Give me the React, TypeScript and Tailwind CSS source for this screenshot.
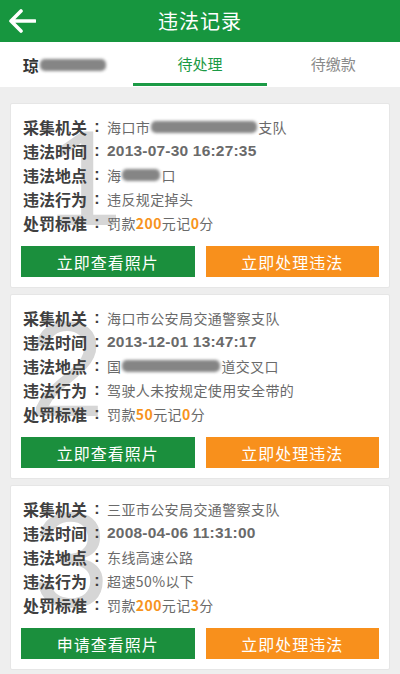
import React from "react";

const FONT = { fontFamily: '"Noto Sans CJK SC", "Noto Sans", "Liberation Sans", sans-serif' };

function Blur({ w }: { w: number }) {
  return (
    <span
      className="inline-block h-[12px] rounded-[5px] bg-[#858585] blur-[1.5px] align-middle mx-[1px]"
      style={{ width: w }}
    />
  );
}

type Row = { label: string; value: React.ReactNode };

function Card({ num, rows, left }: { num: string; rows: Row[]; left: string }) {
  return (
    <div className="relative bg-white border border-[#e6e6e6] rounded-[2px] px-[10px] pt-[11px] pb-[10px] overflow-hidden">
      <div
        className={`absolute top-[6px] ${left} text-[136px] leading-none text-[#d6d6d6] select-none`}
        style={{ fontFamily: '"Liberation Sans", sans-serif' }}
      >
        {num}
      </div>
      <div className="relative">
        {rows.map((r, i) => (
          <div key={i} className="flex items-center h-[24px] pl-[2px]">
            <span className="text-[16px] font-bold text-[#404040] whitespace-nowrap">{r.label}</span>
            <span className="w-[20px] text-center text-[16px] font-bold text-[#404040]" style={{ fontFamily: '"Liberation Sans", sans-serif' }}>:</span>
            <span className="text-[14px] text-[#6a6a6a] whitespace-nowrap flex items-center tracking-[0.4px]">{r.value}</span>
          </div>
        ))}
        <div className="grid grid-cols-2 gap-[11px] mt-[11px]">
          <button className="h-[31px] bg-[#1b8f3d] text-white text-[16px] tracking-[1px]">
            {num === "3" ? "申请查看照片" : "立即查看照片"}
          </button>
          <button className="h-[31px] bg-[#f8901c] text-white text-[16px] tracking-[1px]">立即处理违法</button>
        </div>
      </div>
    </div>
  );
}

const Time = ({ t }: { t: string }) => (
  <span className="text-[15.5px] font-semibold text-[#6a6a6a] tracking-[0.2px]" style={{ fontFamily: '"Liberation Sans", sans-serif' }}>{t}</span>
);

const Fine = ({ a, p }: { a: string; p: string }) => (
  <span>
    罚款<span className="text-[#f7941d] font-bold">{a}</span>元记<span className="text-[#f7941d] font-bold">{p}</span>分
  </span>
);

export default function App() {
  return (
    <div className="w-[400px] h-[674px] bg-[#eeeeee] overflow-hidden" style={FONT}>
      <div className="relative h-[42px] bg-[#17963f] flex items-center justify-center">
        <svg className="absolute left-[8px] top-[9px]" width="28" height="24" viewBox="0 0 28 24">
          <path d="M27 12H3M13 2L3 12l10 10" stroke="white" strokeWidth="3.6" fill="none" strokeLinecap="round" strokeLinejoin="round" />
        </svg>
        <span className="text-white text-[20px] tracking-[1px]">违法记录</span>
      </div>
      <div className="grid grid-cols-3 h-[45px] bg-white">
        <div className="flex items-center justify-center text-[16px] text-[#333] font-bold pr-[4px]">
          琼<Blur w={66} />
        </div>
        <div className="relative flex items-center justify-center text-[15px] text-[#1b9a45]">
          待处理
          <div className="absolute bottom-[1px] left-0 right-0 h-[3px] bg-[#1b9a45]" />
        </div>
        <div className="flex items-center justify-center text-[15px] text-[#8a8a8a]">待缴款</div>
      </div>
      <div className="px-[10px] pt-[16px] flex flex-col gap-[6px]">
        <Card
          num="1"
          left="left-[36px]"
          rows={[
            { label: "采集机关", value: <>海口市<Blur w={106} />支队</> },
            { label: "违法时间", value: <Time t="2013-07-30 16:27:35" /> },
            { label: "违法地点", value: <>海<Blur w={38} />口</> },
            { label: "违法行为", value: "违反规定掉头" },
            { label: "处罚标准", value: <Fine a="200" p="0" /> },
          ]}
        />
        <Card
          num="2"
          left="left-[18px]"
          rows={[
            { label: "采集机关", value: "海口市公安局交通警察支队" },
            { label: "违法时间", value: <Time t="2013-12-01 13:47:17" /> },
            { label: "违法地点", value: <>国<Blur w={98} />道交叉口</> },
            { label: "违法行为", value: "驾驶人未按规定使用安全带的" },
            { label: "处罚标准", value: <Fine a="50" p="0" /> },
          ]}
        />
        <Card
          num="3"
          left="left-[22px]"
          rows={[
            { label: "采集机关", value: "三亚市公安局交通警察支队" },
            { label: "违法时间", value: <Time t="2008-04-06 11:31:00" /> },
            { label: "违法地点", value: "东线高速公路" },
            { label: "违法行为", value: "超速50%以下" },
            { label: "处罚标准", value: <Fine a="200" p="3" /> },
          ]}
        />
      </div>
    </div>
  );
}
